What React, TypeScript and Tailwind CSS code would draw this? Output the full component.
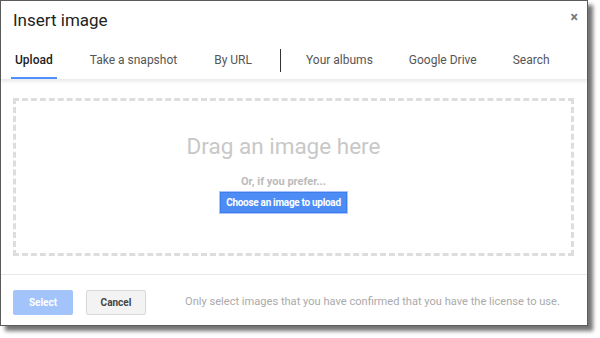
import React from "react";

const tabs = ["Upload", "Take a snapshot", "By URL"];
const tabs2 = ["Your albums", "Google Drive", "Search"];

export default function App() {
  return (
    <div className="w-[600px] h-[338px] bg-white" style={{ fontFamily: "Roboto, 'Liberation Sans', Arial, sans-serif" }}>
      <div className="relative w-[588px] h-[326px] border border-[#5b5b5b] bg-white shadow-[5px_5px_4px_rgba(0,0,0,0.55)] flex flex-col">
        <div className="h-[39px] flex items-center pl-[12px] text-[17px] text-[#222] pt-[1px]">Insert image</div>
        <button className="absolute right-[9px] top-[9px] text-[14px] leading-none font-bold text-[#777]">×</button>
        <div className="h-[40px] flex items-stretch pl-[10px] shadow-[0_2px_3px_rgba(0,0,0,0.08)] border-b border-[#ececec] relative z-10">
          {tabs.map((t, i) => (
            <div
              key={t}
              className={
                "flex items-center px-[4px] text-[12px] " +
                (i === 0
                  ? "text-[#222] font-medium border-b-2 border-[#4d90fe] pt-[3px]"
                  : "text-[#555] ml-[29px] pt-[1px]")
              }
            >
              {t}
            </div>
          ))}
          <div className="ml-[24px] self-center w-px h-[23px] bg-[#333] mt-[1px]" />
          {tabs2.map((t, i) => (
            <div key={t} className={"flex items-center px-[4px] pt-[1px] text-[12px] text-[#555] " + (i === 0 ? "ml-[21px]" : "ml-[28px]")}>
              {t}
            </div>
          ))}
        </div>
        <div className="flex-1 flex flex-col px-[12px] pt-[18px]">
          <div className="h-[158px] w-[561px] border-[3px] border-dashed border-[#dddddd] flex flex-col items-center pr-[20px]">
            <div className="mt-[34px] text-[22.5px] text-[#c8c8c8] leading-none">Drag an image here</div>
            <div className="mt-[18px] text-[11px] font-bold text-[#bbbbbb] leading-none">Or, if you prefer...</div>
            <div className="mt-[4px] border border-[#a9c4ff] p-0">
              <div className="h-[21px] px-[5px] flex items-center bg-[#4d8cf5] text-white text-[10px] tracking-[-0.3px] font-bold border border-[#3d7ee9]">
                Choose an image to upload
              </div>
            </div>
          </div>
        </div>
        <div className="h-[51px] border-t border-[#e8e8e8] flex items-center pl-[12px] pt-[4px]">
          <div className="w-[60px] h-[25px] rounded-[2px] bg-[#a3c4fb] text-white text-[10px] font-bold flex items-center justify-center">Select</div>
          <div className="ml-[13px] w-[60px] h-[25px] rounded-[2px] bg-[#f3f3f3] border border-[#d8d8d8] text-[#444] text-[10px] font-bold flex items-center justify-center">Cancel</div>
          <div className="ml-[39px] text-[11.1px] text-[#aaaaaa] whitespace-nowrap">Only select images that you have confirmed that you have the license to use.</div>
        </div>
      </div>
    </div>
  );
}
